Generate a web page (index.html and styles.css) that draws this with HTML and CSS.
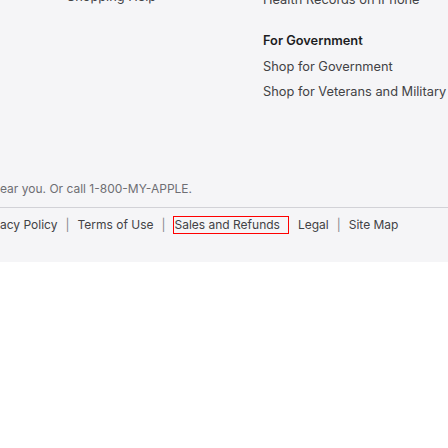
FILE: index.html
```
<!DOCTYPE html>
<html lang="en">
<head>
<meta charset="utf-8">
<title>Footer</title>
<link rel="stylesheet" href="styles.css">
</head>
<body>
<footer class="footer">
  <div class="directory">
    <div class="col col-left">
      <ul class="links">
        <li>Shopping Help</li>
      </ul>
    </div>
    <div class="col">
      <ul class="links">
        <li>Health Records on iPhone</li>
      </ul>
      <h3 class="col-title">For Government</h3>
      <ul class="links">
        <li>Shop for Government</li>
        <li>Shop for Veterans and Military</li>
      </ul>
    </div>
  </div>
  <p class="shop-text">ear you. Or call 1-800-MY-APPLE.</p>
  <div class="legal">
    <span class="legal-link">acy Policy</span>
    <span class="sep">|</span>
    <span class="legal-link">Terms of Use</span>
    <span class="sep">|</span>
    <span class="legal-link boxed">Sales and Refunds</span>
    <span class="legal-link">Legal</span>
    <span class="sep">|</span>
    <span class="legal-link">Site Map</span>
  </div>
</footer>
</body>
</html>
```
FILE: styles.css
```
* { box-sizing: border-box; }
html, body { margin: 0; padding: 0; background: #ffffff; }
.footer {
  background: #f5f5f7;
  height: 262px;
  overflow: hidden;
  font-family: Inter, Roboto, sans-serif;
  font-size: 12px;
  line-height: 16px;
  color: #424245;
  white-space: nowrap;
}
.directory {
  display: grid;
  grid-template-columns: 196px 1fr;
  padding-left: 67px;
  margin-top: -8px;
  font-size: 12.8px;
}
.col-left { margin-top: -3px; }
.links {
  list-style: none;
  margin: 0;
  padding: 0;
  display: flex;
  flex-direction: column;
  gap: 9px;
}
.col-title {
  margin: 25px 0 10px 0;
  font-size: 12.8px;
  line-height: 16px;
  font-weight: 600;
  color: #1d1d1f;
}
.shop-text {
  margin: 81px 0 0 0;
  padding-bottom: 10px;
  border-bottom: 1px solid #d2d2d7;
  color: #6e6e73;
}
.legal {
  display: flex;
  align-items: center;
  margin-top: 8px;
}
.legal-link { color: #424245; }
.sep {
  color: #86868b;
  margin: 0 8px;
}
.boxed {
  border: 1px solid #ff0000;
  padding: 0 8px 0 0;
  margin-right: 9px;
}
```
